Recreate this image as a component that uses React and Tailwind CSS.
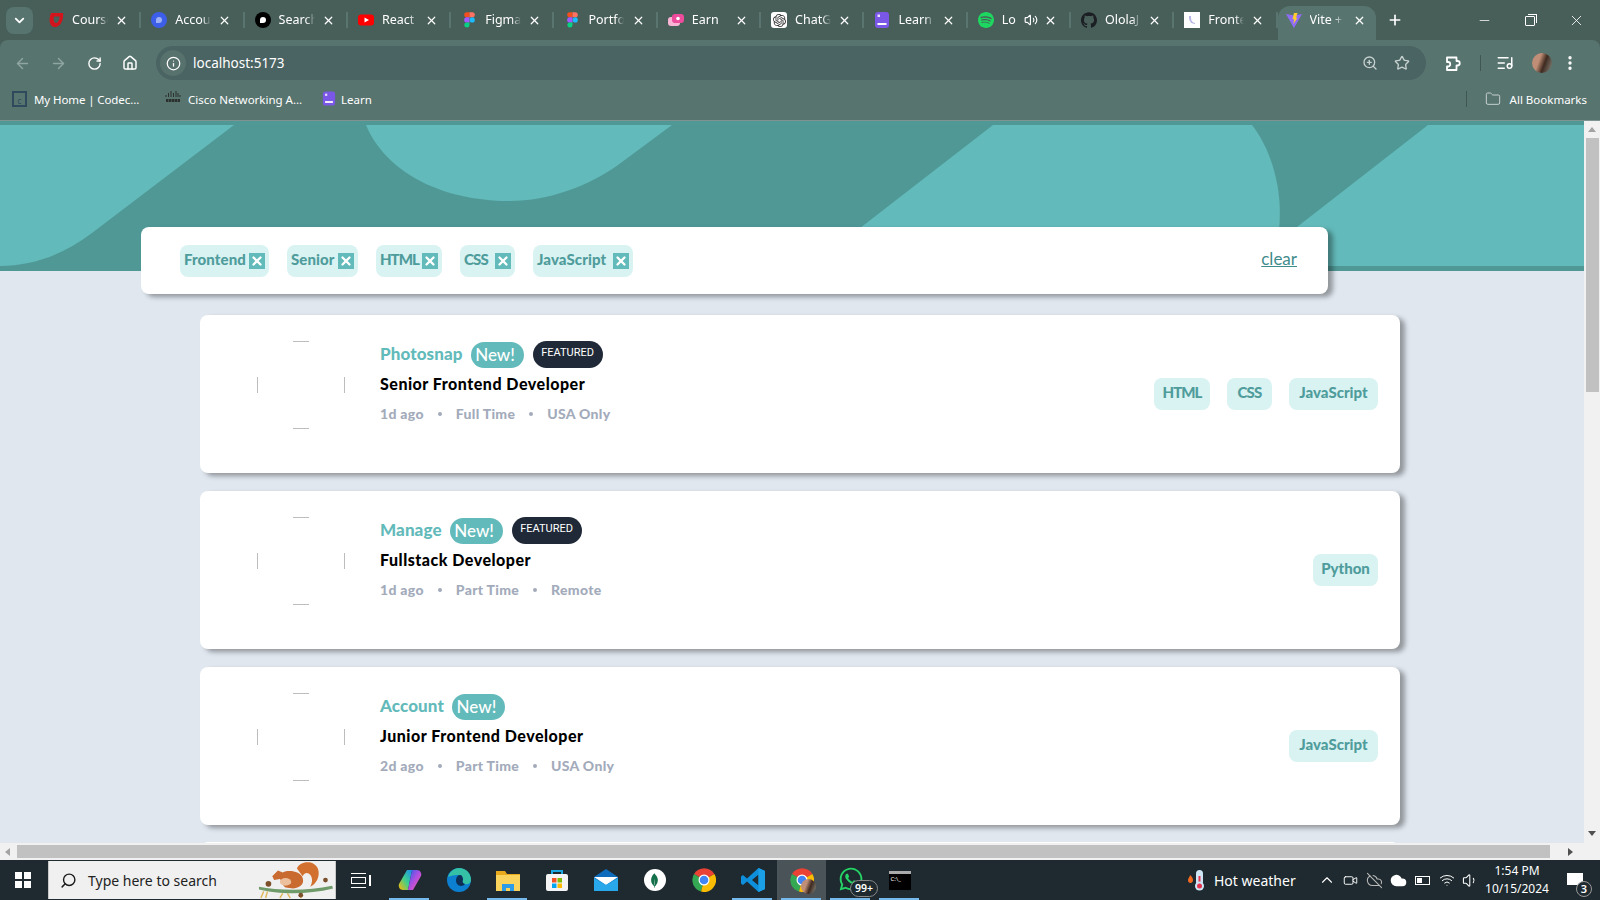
import { ArrowLeft, ArrowRight, ChevronDown, ChevronUp, Cloud, CloudOff, Folder, House, Info, ListMusic, Minus, MoreVertical, Plus, RotateCw, Search, Star, Video, Volume1, Volume2, Wifi, X, ZoomIn } from 'lucide-react'
import { SiGithub, SiOpenai, SiMongodb, SiSpotify } from 'react-icons/si'
import { FaWhatsapp } from 'react-icons/fa'

const SPARTAN = "font-['Lato','Noto_Sans',sans-serif]"

// ---- little favicons ----
function OperaIcon() {
  return <svg viewBox="0 0 16 16" className="w-4 h-4"><path d="M3 1h12c1 7-3 14-8 14C2 15 0 9 3 1z" fill="#d3141c" /><path d="M6 4.500h5.500c0 3.500-1.500 6.500-3.500 6.500S5 8 6 4.500z" fill="#485f59" /></svg>
}
function RoundPin({ bg, fg }) {
  return <svg viewBox="0 0 16 16" className="w-4 h-4"><circle cx="8" cy="8" r="8" fill={bg} /><path d="M5 11V8a3 3 0 1 1 3 3z" fill={fg} /></svg>
}
function YoutubeIcon() {
  return <svg viewBox="0 0 16 16" className="w-4 h-4"><rect y="2.500" width="16" height="11" rx="3" fill="#f00" /><path d="M6.500 5.500 11 8l-4.500 2.500z" fill="#fff" /></svg>
}
function FigmaIcon() {
  return (
    <svg viewBox="0 0 12 17" className="w-[11px] h-4">
      <path d="M3 0h3v5.600H3A2.800 2.800 0 0 1 3 0z" fill="#f24e1e" />
      <path d="M6 0h3a2.800 2.800 0 0 1 0 5.600H6z" fill="#ff7262" />
      <path d="M3 5.600h3v5.600H3a2.800 2.800 0 0 1 0-5.600z" fill="#a259ff" />
      <circle cx="9" cy="8.400" r="2.800" fill="#1abcfe" />
      <path d="M3 11.200h3V14a2.800 2.800 0 1 1-3-2.800z" fill="#0acf83" />
    </svg>
  )
}
function EarnIcon() {
  return <svg viewBox="0 0 16 16" className="w-4 h-4"><rect x="0" y="5" width="12" height="9" rx="3" fill="#f9b4d6" /><rect x="4" y="2" width="12" height="9" rx="3" fill="#ee4b9c" /><circle cx="10" cy="6.500" r="1.800" fill="#fff" /></svg>
}
function LearnIcon({ size = 'w-4 h-4' }) {
  return <svg viewBox="0 0 16 16" className={size}><rect width="14" height="16" x="1" rx="3" fill="#7b57e8" /><rect x="3.500" y="2.500" width="2.500" height="2.500" fill="#e8e0ff" /><rect x="3.500" y="11" width="9" height="2" fill="#fff" /></svg>
}
function ChatIcon() {
  return <span className="w-4 h-4 rounded-[3px] bg-white flex items-center justify-center text-[#333]"><SiOpenai size={13} /></span>
}
function FrontIcon() {
  return <span className="w-4 h-4 bg-white flex items-center justify-center"><span className="w-[6px] h-[8px] border-l-2 border-b border-[#b9b6e8] rounded-bl-md" /></span>
}
function ViteIcon() {
  return (
    <svg viewBox="0 0 16 16" className="w-4 h-4">
      <path d="M0 2 8 3.500 16 2 8.300 15.500a.4.4 0 0 1-.7 0z" fill="#8f6cf5" />
      <path d="M8 1h3.500L10 6l1.500-.3L7.500 12 8 7l-1.500.3z" fill="#ffcb2e" />
    </svg>
  )
}

const TABS = [
  { title: 'Courses', icon: <OperaIcon /> },
  { title: 'Account', icon: <RoundPin bg="#3d5ee8" fg="#9db0f5" /> },
  { title: 'Search', icon: <RoundPin bg="#000" fg="#fff" /> },
  { title: 'React', icon: <YoutubeIcon /> },
  { title: 'Figma', icon: <FigmaIcon /> },
  { title: 'Portfolio', icon: <FigmaIcon /> },
  { title: 'Earn', icon: <EarnIcon /> },
  { title: 'ChatGPT', icon: <ChatIcon /> },
  { title: 'Learn', icon: <LearnIcon /> },
  { title: 'Lo', icon: <SiSpotify size={16} color="#1ed760" />, sound: true },
  { title: 'OlolaJ', icon: <SiGithub size={16} color="#1b1f23" /> },
  { title: 'Frontend', icon: <FrontIcon /> },
]

function Tab({ tab }) {
  return (
    <div className="w-[103.3px] h-[40px] flex items-center shrink-0">
      <span className="w-4 h-4 ml-[10px] flex items-center justify-center shrink-0">{tab.icon}</span>
      <span className="ml-[8px] w-[36px] overflow-hidden whitespace-nowrap text-[12.5px] text-white [mask-image:linear-gradient(to_right,black_75%,transparent)]">{tab.title}</span>
      {tab.sound && <Volume2 size={14} className="text-white -ml-[14px] shrink-0" />}
      <span className={`flex-1 flex justify-center ${tab.sound ? 'pr-[6px]' : 'pr-[4px]'}`}><X size={13} strokeWidth={2.2} className="text-white" /></span>
      <span className="w-[2px] h-[16px] bg-[#5a7570] shrink-0" />
    </div>
  )
}

function TabStrip() {
  return (
    <div className="h-[40px] bg-[#485f59] flex items-center shrink-0">
      <div className="w-[27px] h-[27px] ml-[6px] mr-[5px] rounded-lg bg-[#57746f] flex items-center justify-center shrink-0">
        <ChevronDown size={15} strokeWidth={3} className="text-white" />
      </div>
      {TABS.map(t => <Tab key={t.title} tab={t} />)}
      <div className="w-[98px] h-[34px] mt-[6px] pb-[6px] bg-[#57746f] rounded-t-xl flex items-center shrink-0">
        <span className="ml-[8px] w-4 h-4"><ViteIcon /></span>
        <span className="ml-[8px] w-[34px] overflow-hidden whitespace-nowrap text-[12.5px] text-white [mask-image:linear-gradient(to_right,black_70%,transparent)]">Vite + React</span>
        <span className="flex-1 flex justify-center"><X size={13} strokeWidth={2.2} className="text-white" /></span>
      </div>
      <Plus size={16} strokeWidth={2.5} className="text-white ml-[11px]" />
      <div className="ml-auto flex items-center text-white">
        <span className="w-[46px] flex justify-center"><Minus size={15} strokeWidth={1.2} /></span>
        <span className="w-[46px] flex justify-center">
          <span className="relative w-[10px] h-[10px] border border-white rounded-[1px] mt-[2px] after:absolute after:-top-[3px] after:left-[2px] after:w-[9px] after:h-[9px] after:border-t after:border-r after:border-white" />
        </span>
        <span className="w-[46px] flex justify-center mr-[1px]"><X size={17} strokeWidth={1.2} /></span>
      </div>
    </div>
  )
}

function ExtensionIcon() {
  return (
    <svg viewBox="0 0 18 18" className="w-[18px] h-[18px]" fill="none" stroke="white" strokeWidth="1.800" strokeLinejoin="round">
      <path d="M3 3.500h9.500V7h1a1.800 1.800 0 0 1 0 4.500h-1V16H3v-3.500h1a2 2 0 0 0 0-4.500H3z" />
    </svg>
  )
}

function Toolbar() {
  return (
    <div className="h-[44px] bg-[#57746f] rounded-t-lg flex items-start pt-[6px] shrink-0">
      <div className="w-[156px] h-[34px] flex items-center shrink-0">
        <span className="w-[36px] ml-[4px] flex justify-center"><ArrowLeft size={17} className="text-[#8fa5a1]" /></span>
        <span className="w-[36px] flex justify-center"><ArrowRight size={17} className="text-[#8fa5a1]" /></span>
        <span className="w-[36px] flex justify-center"><RotateCw size={15} strokeWidth={2.2} className="text-white" /></span>
        <span className="w-[36px] flex justify-center"><House size={16} strokeWidth={2.2} className="text-white" /></span>
      </div>
      <div className="w-[1270px] h-[34px] bg-[#4a6363] rounded-full flex items-center shrink-0">
        <span className="w-[26px] h-[26px] ml-[4px] rounded-full bg-[#57716d] flex items-center justify-center"><Info size={15} className="text-white" /></span>
        <span className="ml-[7px] text-[13.5px] text-white">localhost:5173</span>
        <ZoomIn size={16} className="ml-auto text-[#c6d1cf]" />
        <Star size={16} className="ml-[16px] mr-[16px] text-[#c6d1cf]" />
      </div>
      <div className="flex-1 h-[34px] flex items-center text-white">
        <span className="ml-[18px]"><ExtensionIcon /></span>
        <span className="w-px h-[16px] bg-[#3f5652] ml-[18px]" />
        <ListMusic size={18} className="ml-[15px]" />
        <span className="w-[20px] h-[20px] ml-[18px] rounded-full bg-[linear-gradient(110deg,#c08e76_35%,#3e2a20_60%,#8a8a80)]" />
        <MoreVertical size={18} strokeWidth={2.5} className="ml-[9px]" />
      </div>
    </div>
  )
}

function CiscoIcon() {
  return (
    <svg viewBox="0 0 16 12" className="w-4 h-3 text-[#2b2f2e]">
      <path d="M1 4v2M3.500 2v4M6 0v6M8.500 2v4M11 0v6M13 2v4M15 4v2" stroke="currentColor" strokeWidth="1" />
      <path d="M1 9.500h14" stroke="currentColor" strokeWidth="3" strokeDasharray="2.500 0.500" />
    </svg>
  )
}

function BookmarksBar() {
  return (
    <div className="h-[37px] bg-[#57746f] border-b border-[#7f9490] flex items-start pt-[7px] text-[11.5px] text-white shrink-0">
      <span className="ml-[12px] w-[15px] h-[16px] border-2 border-[#2f4a5c] flex items-end justify-center text-[8px] leading-none text-[#2f4a5c]">c</span>
      <span className="ml-[7px] w-[111px] truncate tracking-[-0.1px]">My Home | Codecademy</span>
      <span className="ml-[20px]"><CiscoIcon /></span>
      <span className="ml-[7px] w-[115px] truncate">Cisco Networking Academy</span>
      <span className="ml-[19px]"><LearnIcon size="w-[14px] h-[15px]" /></span>
      <span className="ml-[5px]">Learn</span>
      <span className="ml-auto w-px h-[16px] bg-[#3f5652]" />
      <Folder size={16} strokeWidth={1.5} className="ml-[18px] text-[#c6d1cf]" />
      <span className="ml-[9px] mr-[13px]">All Bookmarks</span>
    </div>
  )
}

// ---- page ----
function HeaderPattern() {
  return (
    <svg viewBox="0 0 1584 150" className="block w-[1584px] h-[150px] bg-[#4f9896]">
      <g fill="#63baba">
        <path d="M0 4H234L92 112C62 135 30 145 0 145Z" />
        <path d="M366 4C385 50 440 80 509 80C550 80 590 64 618 44L672 4Z" />
        <path d="M993 4H1252C1276 35 1290 90 1271 145H811Z" />
        <path d="M1428 4H1584V145H1247Z" />
      </g>
    </svg>
  )
}

const CHIP_WIDTHS = { Frontend: 'w-[89px]', Senior: 'w-[71px]', HTML: 'w-[66px]', CSS: 'w-[55px]', JavaScript: 'w-[100px]' }
const TAG_WIDTHS = { HTML: 'w-[56px]', CSS: 'w-[45px]', JavaScript: 'w-[89px]', Python: 'w-[65px]' }
const TIGHT = { HTML: 'tracking-[-1px]', CSS: 'tracking-[-0.8px]' }

function FilterChip({ label }) {
  return (
    <div className={`h-[32px] pl-[4px] pr-[4px] bg-[#d9f3f2] rounded-lg flex items-center justify-between shrink-0 ${CHIP_WIDTHS[label]}`}>
      <span className={`text-[15px] font-black text-[#4f9c9c] leading-none -mt-[2px] whitespace-nowrap ${TIGHT[label] || 'tracking-[0.1px]'}`}>{label}</span>
      <span className="w-4 h-4 bg-[#63baba] flex items-center justify-center shrink-0"><X size={14} strokeWidth={4} className="text-white" /></span>
    </div>
  )
}

function FilterBar() {
  return (
    <div className={`relative w-[1187px] h-[67px] ml-[141px] -mt-[44px] bg-white rounded-lg shadow-[5px_3px_5px_rgba(0,0,0,0.35)] flex items-center pl-[39px] pr-[31px] ${SPARTAN}`}>
      <div className="flex gap-[18px]">
        {['Frontend', 'Senior', 'HTML', 'CSS', 'JavaScript'].map(f => <FilterChip key={f} label={f} />)}
      </div>
      <span className="ml-auto -mt-[3px] text-[17px] text-[#3f8c8c] underline">clear</span>
    </div>
  )
}

const JOBS = [
  { company: 'Photosnap', featured: true, title: 'Senior Frontend Developer', meta: ['1d ago', 'Full Time', 'USA Only'], tags: ['HTML', 'CSS', 'JavaScript'] },
  { company: 'Manage', featured: true, title: 'Fullstack Developer', meta: ['1d ago', 'Part Time', 'Remote'], tags: ['Python'] },
  { company: 'Account', featured: false, title: 'Junior Frontend Developer', meta: ['2d ago', 'Part Time', 'USA Only'], tags: ['JavaScript'] },
]

// broken image with a round corner: only four slivers of its outline show
function BrokenLogo() {
  return (
    <svg viewBox="0 0 88 88" className="w-[88px] h-[88px] shrink-0" stroke="#bdbdbd" strokeWidth="1">
      <path d="M36 0.500H52M36 87.500H52M0.500 36V52M87.500 36V52" />
    </svg>
  )
}

function JobCard({ job }) {
  return (
    <div className="h-[158px] bg-white rounded-lg shadow-[5px_3px_5px_rgba(0,0,0,0.35)] flex items-center pl-[57px] pr-[22px]">
      <div className="mb-[18px]">
        <BrokenLogo />
      </div>
      <div className="ml-[35px] mb-[18px] h-[88px] flex flex-col">
        <div className="flex items-center h-[27px]">
          <span className="text-[17px] font-black text-[#63baba] -mt-[2px] tracking-[0.1px]">{job.company}</span>
          <span className="ml-[8px] h-[26px] w-[53px] rounded-full bg-[#63baba] text-white text-[17px] font-medium flex items-center justify-center pr-[4px]">New!</span>
          {job.featured && <span className="ml-[9px] h-[27px] w-[70px] rounded-full bg-[#1f2937] text-white text-[11px] font-['Roboto',sans-serif] flex items-center justify-center pb-[3px]">FEATURED</span>}
        </div>
        <div className="mt-[4px] text-[16px] font-black text-black tracking-[0.5px]">{job.title}</div>
        <div className="mt-[7px] flex items-center gap-[14px] text-[14px] font-black text-[#a3abbb] tracking-[0.3px]">
          {job.meta.map((m, i) => (
            <span key={m} className="flex items-center gap-[14px]">
              {i > 0 && <span className="w-[4px] h-[4px] rounded-full bg-[#a3abbb]" />}
              {m}
            </span>
          ))}
        </div>
      </div>
      <div className="ml-auto flex gap-[17px]">
        {job.tags.map(t => (
          <span key={t} className={`h-[32px] rounded-lg bg-[#d9f3f2] text-[15px] font-black text-[#4f9c9c] text-center leading-[28px] ${TAG_WIDTHS[t]} ${TIGHT[t] || ''}`}>{t}</span>
        ))}
      </div>
    </div>
  )
}

function VScrollbar() {
  return (
    <div className="w-[16px] bg-[#f1f1f1] flex flex-col items-center shrink-0">
      <span className="mt-[6px] w-0 h-0 border-x-[4px] border-x-transparent border-b-[5px] border-b-[#a3a3a3]" />
      <span className="mt-[6px] w-[13px] h-[254px] bg-[#c1c1c1]" />
      <span className="mt-auto mb-[7px] w-0 h-0 border-x-[4px] border-x-transparent border-t-[5px] border-t-[#505050]" />
    </div>
  )
}

function HScrollbar() {
  return (
    <div className="h-[17px] bg-[#f1f1f1] flex items-center shrink-0">
      <span className="ml-[5px] w-0 h-0 border-y-[4px] border-y-transparent border-r-[5px] border-r-[#a3a3a3]" />
      <span className="ml-[7px] w-[1533px] h-[13px] bg-[#c1c1c1]" />
      <span className="ml-[18px] w-0 h-0 border-y-[4px] border-y-transparent border-l-[5px] border-l-[#505050]" />
    </div>
  )
}

// ---- taskbar ----
function CopilotIcon() {
  return (
    <svg viewBox="0 0 24 24" className="w-6 h-6">
      <path d="M9 2h5l-4 20H5C2 22 0 19 1 16z" fill="url(#cop1)" />
      <path d="M15 22h-5L14 2h5c3 0 5 3 4 6z" fill="url(#cop2)" />
      <defs>
        <linearGradient id="cop1" x1="0" y1="1" x2="1" y2="0"><stop offset="0" stopColor="#ffb800" /><stop offset="0.5" stopColor="#3ecf8e" /><stop offset="1" stopColor="#1b8cf2" /></linearGradient>
        <linearGradient id="cop2" x1="0" y1="0" x2="1" y2="1"><stop offset="0" stopColor="#2a5de8" /><stop offset="0.5" stopColor="#b24fe0" /><stop offset="1" stopColor="#f7609c" /></linearGradient>
      </defs>
    </svg>
  )
}
function EdgeIcon() {
  return (
    <svg viewBox="0 0 24 24" className="w-6 h-6">
      <circle cx="12" cy="12" r="12" fill="#0c7fd1" />
      <path d="M1 9C3 3 8 0 12 0c7 0 12 5 12 12 0 3-3 5-6 4-3-.5-3-3-2-4 0-3-3-5-6-5-4 0-7 1-9 2z" fill="#35c1a5" />
      <path d="M9 12c0-3 2-5 4-5 2 0 3 2 3 5-1 1 0 4 2 4-2 3-9 3-9-4z" fill="#0d2f55" />
    </svg>
  )
}
function ExplorerIcon() {
  return (
    <svg viewBox="0 0 24 22" className="w-6 h-[22px]">
      <path d="M0 2h9l2 3h13v17H0z" fill="#e8a91c" />
      <rect y="6" width="24" height="16" fill="#f9d35c" />
      <path d="M6 22v-7h12v7h-4v-3h-4v3z" fill="#2d9ce8" />
    </svg>
  )
}
function StoreIcon() {
  return (
    <svg viewBox="0 0 24 24" className="w-6 h-6">
      <path d="M7 6V3h10v3" fill="none" stroke="#18a7e0" strokeWidth="2" />
      <rect x="1" y="6" width="22" height="17" rx="2" fill="#f4f4f4" />
      <rect x="7" y="10" width="4.500" height="4.500" fill="#f25022" /><rect x="12.500" y="10" width="4.500" height="4.500" fill="#7fba00" />
      <rect x="7" y="15.500" width="4.500" height="4.500" fill="#00a4ef" /><rect x="12.500" y="15.500" width="4.500" height="4.500" fill="#ffb900" />
    </svg>
  )
}
function MailIcon() {
  return (
    <svg viewBox="0 0 24 24" className="w-6 h-6">
      <path d="M0 9 12 1l12 8v14H0z" fill="#0f6cbd" />
      <path d="M0 9h24L12 17z" fill="#ffffff" />
      <path d="M0 10 12 17 24 10v13H0z" fill="#28a8ea" />
    </svg>
  )
}
function MongoIcon() {
  return <span className="w-[22px] h-[22px] rounded-full bg-white flex items-center justify-center text-[#13704a]"><SiMongodb size={15} /></span>
}
function ChromeIcon({ avatar }) {
  return (
    <span className="relative w-6 h-6">
      <svg viewBox="0 0 24 24" className="w-6 h-6">
        <path d="M12 12 2 6A12 12 0 0 1 22.400 6z" fill="#ea4335" />
        <path d="M12 12 2 6A12 12 0 0 0 9 23.600z" fill="#34a853" />
        <path d="M12 12 22.400 6A12 12 0 0 1 9 23.600z" fill="#fbbc04" />
        <circle cx="12" cy="12" r="5.500" fill="#fff" /><circle cx="12" cy="12" r="4.300" fill="#4285f4" />
      </svg>
      {avatar && <span className="absolute -right-[2px] -bottom-[2px] w-[15px] h-[15px] rounded-full bg-[linear-gradient(110deg,#c08e76_35%,#3e2a20_60%,#8a8a80)]" />}
    </span>
  )
}
function VSCodeIcon() {
  return (
    <svg viewBox="0 0 24 24" className="w-6 h-6">
      <path d="M17.500 0 24 3v18l-6.500 3L6 13.500 2 17l-2-1.500v-7L2 7l4 3.500z" fill="#0d8fdc" />
      <path d="M17.500 6.500 11 12l6.500 5.500z" fill="#1e2a2f" />
      <path d="M17.500 0 24 3v18l-6.500 3z" fill="#1ba0e8" />
    </svg>
  )
}
function SquirrelArt() {
  return (
    <svg viewBox="0 0 78 40" className="absolute right-0 top-0 w-[78px] h-[38px]">
      <path d="M0 27C20 31 50 32 77 26l1 3C50 36 20 35 0 30z" fill="#6f9a6a" />
      <path d="M5 32 2 39M9 32l-2 7M25 34l-3 5M30 34l3 5M45 34l-1 5" stroke="#e0b85c" strokeWidth="1.500" />
      <circle cx="10" cy="24" r="3" fill="#7a4f2a" /><circle cx="70" cy="20" r="2.500" fill="#7a4f2a" /><circle cx="44" cy="36" r="2.500" fill="#7a4f2a" />
      <path d="M40 8C42 0 58-2 62 8c3 8-2 17-8 19C60 16 50 8 46 16z" fill="#d2702f" />
      <path d="M14 16 20 10l5 2C32 9 44 11 46 18c2 6-2 10-10 11l-8-1C24 25 24 21 22 19l-6 1z" fill="#c96a30" />
      <ellipse cx="28" cy="22" rx="6" ry="4" fill="#ecc09c" />
    </svg>
  )
}

function TaskBtn({ children, line, active }) {
  return (
    <div className={`relative w-[49px] h-[40px] flex items-center justify-center shrink-0 ${active ? 'bg-[#4a5357]' : ''}`}>
      {children}
      {line && <span className="absolute bottom-0 left-[4px] right-[5px] h-[2px] bg-[#76b9ed]" />}
    </div>
  )
}

function Taskbar() {
  return (
    <div className="h-[40px] bg-[#1e2a2f] flex items-center shrink-0">
      <div className="w-[48px] flex justify-center">
        <span className="grid grid-cols-2 gap-[2px] w-[16px] h-[16px] -ml-[2px] [&>i]:bg-white">
          <i /><i /><i /><i />
        </span>
      </div>
      <div className="relative w-[288px] h-[38px] bg-[#f0f0f0] flex items-center border-x border-[#c8c8c8]">
        <Search size={17} className="ml-[11px] text-[#1a1a1a] -scale-x-100" />
        <span className="ml-[11px] text-[14px] text-[#222]">Type here to search</span>
        <SquirrelArt />
      </div>
      <TaskBtn>
        <span className="relative w-[15px] h-[15px] border-y border-x-0 border-white mr-[4px] after:absolute after:left-0 after:right-0 after:top-[3px] after:h-[7px] after:border after:border-white before:absolute before:-right-[5px] before:top-[1px] before:h-[11px] before:w-[2px] before:bg-white" />
      </TaskBtn>
      <TaskBtn line><CopilotIcon /></TaskBtn>
      <TaskBtn><EdgeIcon /></TaskBtn>
      <TaskBtn line><ExplorerIcon /></TaskBtn>
      <TaskBtn><StoreIcon /></TaskBtn>
      <TaskBtn><MailIcon /></TaskBtn>
      <TaskBtn><MongoIcon /></TaskBtn>
      <TaskBtn><ChromeIcon /></TaskBtn>
      <TaskBtn line><VSCodeIcon /></TaskBtn>
      <TaskBtn line active><ChromeIcon avatar /></TaskBtn>
      <TaskBtn line>
        <FaWhatsapp size={26} className="text-[#25d366] -mt-[3px]" />
        <span className="absolute left-[24px] bottom-[3px] h-[17px] w-[28px] rounded-full bg-[#1e2a2f] border border-[#888] text-white text-[10.5px] font-semibold leading-[15px] text-center">99+</span>
      </TaskBtn>
      <TaskBtn line>
        <span className="w-[22px] h-[19px] bg-black border-t-[3px] border-[#aaa] text-white text-[6px] leading-[10px] pl-[2px]">C:\_</span>
      </TaskBtn>
      <div className="ml-auto flex items-center text-white h-full">
        <svg viewBox="0 0 22 22" className="w-[22px] h-[22px]">
          <path d="M2 11c0-2 2-3 2-5 2 2 3 3 3 5s-1 3-2.500 3S2 13 2 11z" fill="#f36b21" />
          <rect x="10" y="1" width="7" height="15" rx="3.500" fill="#cfe6f7" />
          <rect x="12.500" y="7" width="2" height="9" fill="#e5334b" />
          <circle cx="13.500" cy="17" r="4.500" fill="#cfe6f7" /><circle cx="13.500" cy="17" r="2.500" fill="#e5334b" />
        </svg>
        <span className="ml-[6px] w-[82px] text-[14px] whitespace-nowrap">Hot weather</span>
        <ChevronUp size={18} strokeWidth={1.5} className="ml-[22px]" />
        <Video size={15} strokeWidth={1.5} className="ml-[7px]" />
        <CloudOff size={17} strokeWidth={1.5} className="ml-[8px] text-[#b8b8b8]" />
        <Cloud size={17} fill="white" className="ml-[7px]" />
        <span className="ml-[8px] w-[15px] h-[9px] border border-white flex items-center"><span className="w-[5px] h-[5px] ml-px bg-white" /></span>
        <Wifi size={16} strokeWidth={1.5} className="ml-[9px]" />
        <Volume1 size={17} strokeWidth={1.5} className="ml-[7px]" />
        <div className="ml-[6px] w-[64px] text-[12px] text-center leading-[18px] whitespace-nowrap">
          <div>1:54 PM</div>
          <div>10/15/2024</div>
        </div>
        <div className="relative w-[48px] h-full flex items-center justify-center ml-[3px]">
          <span className="w-[16px] h-[12px] bg-white -mt-[3px] mr-[3px]" />
          <span className="absolute right-[8px] bottom-[3px] w-[16px] h-[16px] rounded-full bg-[#1e2a2f] border border-[#999] text-[11px] font-semibold leading-[14px] text-center">3</span>
        </div>
      </div>
    </div>
  )
}

export default function App() {
  return (
    <div className="w-[1600px] h-[900px] flex flex-col overflow-hidden bg-[#485f59] font-['Noto_Sans',sans-serif]">
      <TabStrip />
      <Toolbar />
      <BookmarksBar />
      <div className="flex-1 min-h-0 flex">
        <main className={`w-[1584px] overflow-hidden bg-[#e0e7ef] ${SPARTAN}`}>
          <HeaderPattern />
          <FilterBar />
          <div className="w-[1200px] ml-[200px] mt-[21px] flex flex-col gap-[18px]">
            {JOBS.map(job => <JobCard key={job.company} job={job} />)}
            <div className="h-[158px] -mt-px bg-white rounded-lg" />
          </div>
        </main>
        <VScrollbar />
      </div>
      <HScrollbar />
      <Taskbar />
    </div>
  )
}
